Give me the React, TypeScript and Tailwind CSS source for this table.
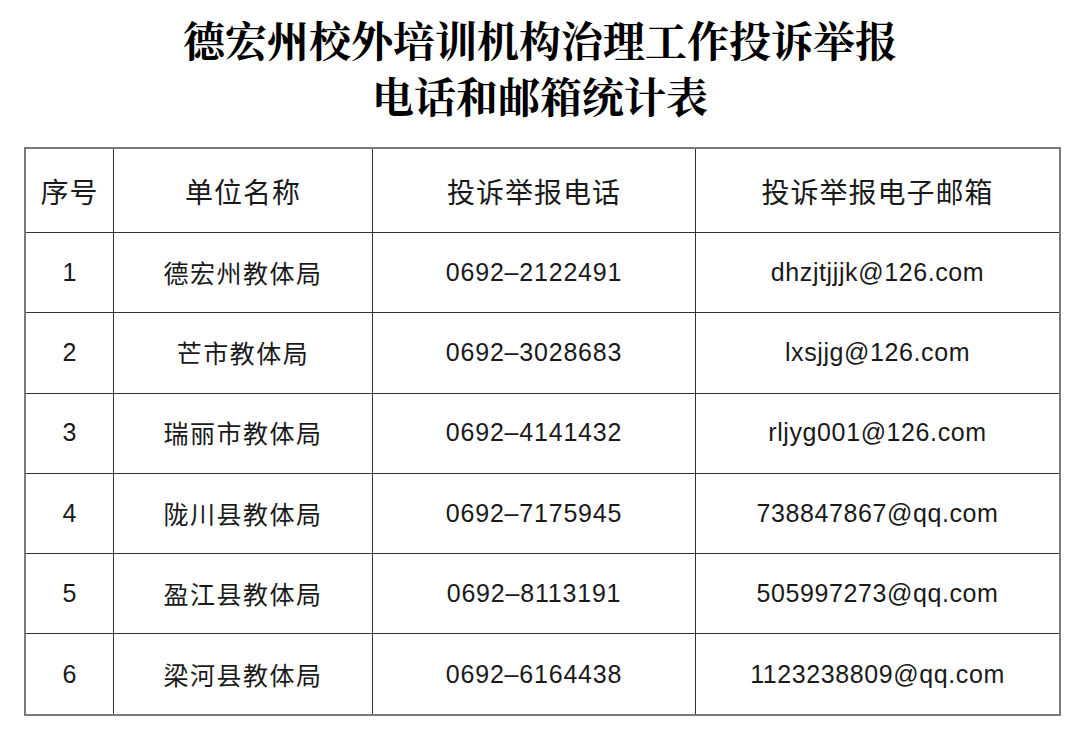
import React from "react";

const rows = [
  ["1", "德宏州教体局", "0692–2122491", "dhzjtjjjk@126.com"],
  ["2", "芒市教体局", "0692–3028683", "lxsjjg@126.com"],
  ["3", "瑞丽市教体局", "0692–4141432", "rljyg001@126.com"],
  ["4", "陇川县教体局", "0692–7175945", "738847867@qq.com"],
  ["5", "盈江县教体局", "0692–8113191", "505997273@qq.com"],
  ["6", "梁河县教体局", "0692–6164438", "1123238809@qq.com"],
];

const head = ["序号", "单位名称", "投诉举报电话", "投诉举报电子邮箱"];

export default function App() {
  return (
    <div className="w-[1080px] h-[740px] bg-white text-[#1a1a1a] overflow-hidden">
      <div className="pt-[11px] text-center text-[42px] leading-[56px] font-bold text-black font-['Noto_Serif_CJK_SC','Noto_Sans_CJK_SC',serif]">
        <div>德宏州校外培训机构治理工作投诉举报</div>
        <div>电话和邮箱统计表</div>
      </div>
      <div className="ml-[24px] mt-[24px] w-[1037px] border-2 border-[#7a7a7a]">
        <div className="grid grid-cols-[88px_259px_323px_1fr] h-[84px] border-b border-[#333] text-[28px] tracking-[1px] font-['Noto_Sans_CJK_SC',sans-serif]">
          {head.map((h, i) => (
            <div
              key={h}
              className={
                i < head.length - 1
                  ? "flex items-center justify-center border-r border-[#333]"
                  : "flex items-center justify-center"
              }
            >
              {h}
            </div>
          ))}
        </div>
        {rows.map((r, i) => (
          <div
            key={r[0]}
            className={
              i < rows.length - 1
                ? "grid grid-cols-[88px_259px_323px_1fr] h-[80.3px] border-b border-[#333]"
                : "grid grid-cols-[88px_259px_323px_1fr] h-[80px]"
            }
          >
            <div className="flex items-center justify-center border-r border-[#333] text-[25px] font-['Liberation_Sans',sans-serif]">
              {r[0]}
            </div>
            <div className="flex items-center justify-center border-r border-[#333] text-[25px] tracking-[1.5px] font-['Noto_Sans_CJK_SC',sans-serif]">
              {r[1]}
            </div>
            <div className="flex items-center justify-center border-r border-[#333] text-[25px] tracking-[0.8px] font-['Liberation_Sans',sans-serif]">
              {r[2]}
            </div>
            <div className="flex items-center justify-center text-[25px] tracking-[0.6px] font-['Liberation_Sans',sans-serif]">
              {r[3]}
            </div>
          </div>
        ))}
      </div>
    </div>
  );
}
